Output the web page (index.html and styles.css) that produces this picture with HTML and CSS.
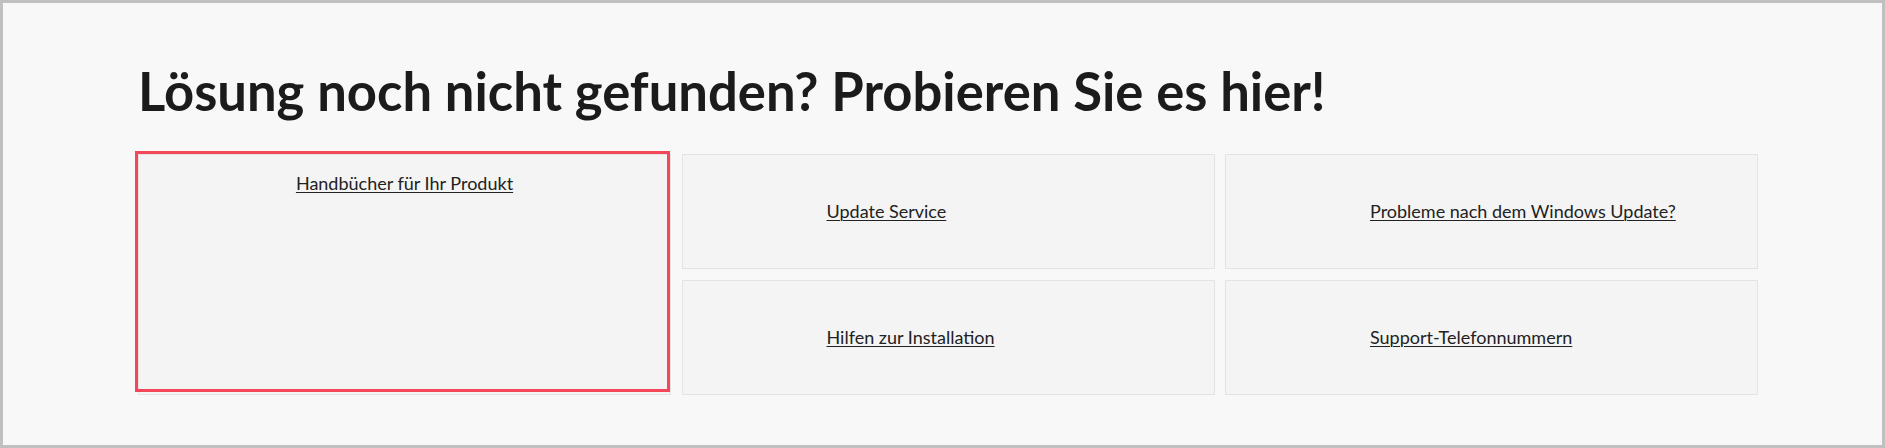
FILE: index.html
```html
<!DOCTYPE html>
<html lang="de">
<head>
    <meta charset="UTF-8">
    <meta name="viewport" content="width=device-width, initial-scale=1.0">
    <title>Support - Lösung finden</title>
    <link rel="stylesheet" href="styles.css">
</head>
<body>
    <section class="help">
        <h1>Lösung noch nicht gefunden? Probieren Sie es hier!</h1>

        <div class="help-grid">
            <div class="help-card help-card-big selected">
                <a href="#">Handbücher für Ihr Produkt</a>
            </div>
            <div class="help-card">
                <a href="#">Update Service</a>
            </div>
            <div class="help-card">
                <a href="#">Probleme nach dem Windows Update?</a>
            </div>
            <div class="help-card">
                <a href="#">Hilfen zur Installation</a>
            </div>
            <div class="help-card">
                <a href="#">Support-Telefonnummern</a>
            </div>
        </div>
    </section>
</body>
</html>
```

FILE: styles.css
```css
* {
    box-sizing: border-box;
}

body {
    margin: 0;
    height: 448px;
    border: 3px solid #c0c0c0;
    background-color: #f8f8f8;
    font-family: 'Lato', sans-serif;
    color: #222;
}

.help {
    padding: 56px 0 0 135px;
}

.help h1 {
    margin: 0;
    font-size: 52.6px;
    line-height: 1.2;
    font-weight: 700;
    color: #1b1b1b;
}

.help-grid {
    display: grid;
    grid-template-columns: repeat(3, 533px);
    grid-template-rows: 115px 115px;
    column-gap: 10.5px;
    row-gap: 11px;
    margin-top: 32px;
}

.help-card {
    position: relative;
    display: flex;
    align-items: center;
    padding-left: 144px;
    background-color: #f4f4f4;
    border: 1px solid #e3e3e3;
}

.help-card a {
    font-size: 18px;
    line-height: 1.2;
    color: #222;
    text-decoration: underline;
    text-decoration-thickness: 1px;
    text-underline-offset: 2px;
}

.help-card-big {
    grid-row: span 2;
    align-items: flex-start;
    justify-content: center;
    padding: 18px 0 0;
}

/* red selection frame, a little off the card */
.help-card.selected::after {
    content: "";
    position: absolute;
    top: -4px;
    left: -4px;
    right: 0;
    bottom: 2px;
    border: 3px solid #f5475a;
    pointer-events: none;
}
```
